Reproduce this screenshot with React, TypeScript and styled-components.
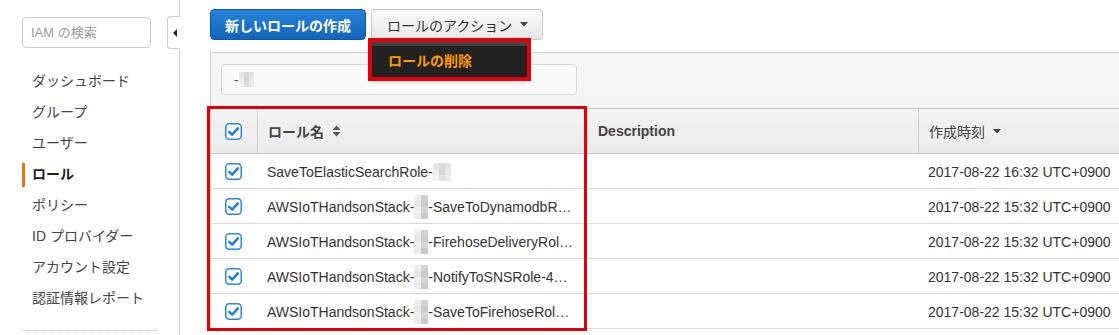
import React from "react";
import styled, { createGlobalStyle } from "styled-components";

const GlobalStyle = createGlobalStyle`
  html, body { margin: 0; padding: 0; background: #fff; }
  body {
    font-family: "Liberation Sans", "Noto Sans CJK JP", sans-serif;
    font-size: 14px;
    color: #333;
    overflow: hidden;
  }
  * { box-sizing: border-box; }
`;

const Page = styled.div`
  display: flex;
  width: 1119px;
  height: 335px;
  overflow: hidden;
`;

const Sidebar = styled.aside`
  position: relative;
  flex: 0 0 180px;
  border-right: 1px solid #ccc;
  padding: 17px 0 0 22px;
`;

const SideSearch = styled.div`
  width: 129px;
  height: 31px;
  border: 1px solid #ccc;
  border-radius: 4px;
  padding-left: 8px;
  font-size: 13px;
  line-height: 29px;
  color: #9a9a9a;
`;

const CollapseTab = styled.div`
  position: absolute;
  right: -1px;
  top: 16px;
  width: 13px;
  height: 33px;
  background: #fff;
  border: 1px solid #ccc;
  border-right: none;
  border-radius: 4px 0 0 4px;
  display: flex;
  align-items: center;
  justify-content: center;
  &::after {
    content: "";
    width: 0;
    height: 0;
    border-top: 4px solid transparent;
    border-bottom: 4px solid transparent;
    border-right: 4px solid #222;
    margin-left: 2px;
  }
`;

const NavList = styled.ul`
  list-style: none;
  margin: 18px 0 0;
  padding: 0;
`;

const NavItem = styled.li<{ $active?: boolean }>`
  position: relative;
  height: 31px;
  line-height: 31px;
  padding-left: 10px;
  font-size: 14px;
  color: ${(p) => (p.$active ? "#222" : "#444")};
  font-weight: ${(p) => (p.$active ? "bold" : "normal")};
  &::before {
    content: "";
    display: ${(p) => (p.$active ? "block" : "none")};
    position: absolute;
    left: 0;
    top: 4px;
    width: 3px;
    height: 24px;
    background: #ec7211;
  }
`;

const SideDivider = styled.div`
  width: 135px;
  margin-top: 16px;
  border-top: 1px dotted #bbb;
`;

const Main = styled.main`
  flex: 1;
  padding: 9px 0 0 30px;
  min-width: 0;
`;

const Toolbar = styled.div`
  display: flex;
  gap: 5px;
  height: 31px;
`;

const PrimaryButton = styled.button`
  height: 31px;
  padding: 0 14px;
  border: 1px solid #0f58a8;
  border-radius: 4px;
  background: linear-gradient(#2783d9, #1464bb);
  color: #fff;
  font-family: inherit;
  font-size: 14px;
  font-weight: bold;
  cursor: pointer;
`;

const ActionWrap = styled.div`
  position: relative;
`;

const ActionButton = styled.button`
  height: 31px;
  width: 172px;
  padding: 0 0 0 15px;
  display: flex;
  align-items: center;
  gap: 8px;
  border: 1px solid #c6c6c6;
  border-radius: 4px;
  background: linear-gradient(#fbfbfb, #e6e6e6);
  color: #333;
  font-family: inherit;
  font-size: 14px;
  cursor: pointer;
`;

const Dropdown = styled.div`
  position: absolute;
  top: 33px;
  left: 1px;
  width: 155px;
  height: 35px;
  background: #222;
  border-top: 4px solid #444;
  outline: 4px solid #e2000c;
  box-shadow: 0 3px 6px rgba(0, 0, 0, 0.35);
  padding-left: 16px;
  line-height: 31px;
  color: #ff9900;
  font-size: 14px;
  font-weight: bold;
  z-index: 5;
`;

const Panel = styled.section`
  margin-top: 12px;
  border-top: 1px solid #ccc;
  border-left: 1px solid #ccc;
  background: linear-gradient(#f6f6f6, #eeeeee);
`;

const FilterBar = styled.div`
  padding: 11px 10px 13px;
`;

const FilterInput = styled.div`
  width: 356px;
  height: 31px;
  border: 1px solid #d6d6d6;
  border-radius: 4px;
  background: #fafafa;
  padding-left: 12px;
  display: flex;
  align-items: center;
  color: #555;
  font-size: 14px;
`;

const TableArea = styled.div`
  position: relative;
  background: #fff;
`;

const Highlight = styled.div`
  position: absolute;
  left: -4px;
  top: -2px;
  width: 380px;
  height: 225px;
  border: 3px solid #e2000c;
  pointer-events: none;
  z-index: 3;
`;

const Row = styled.div<{ $head?: boolean }>`
  display: grid;
  grid-template-columns: 46px 330px 331px 1fr;
  height: ${(p) => (p.$head ? "46px" : "35px")};
  border-top: ${(p) => (p.$head ? "1px solid #c4c4c4" : "none")};
  border-bottom: 1px solid ${(p) => (p.$head ? "#c8c8c8" : "#dadada")};
  background: ${(p) => (p.$head ? "linear-gradient(#f3f3f3, #ebebeb)" : "#fff")};
`;

const CheckCell = styled.div`
  display: flex;
  align-items: center;
  padding-left: 14px;
`;

const HeadCell = styled.div<{ $bold?: boolean }>`
  display: flex;
  align-items: center;
  gap: 8px;
  border-left: 1px solid #cfcfcf;
  padding-left: 10px;
  font-weight: ${(p) => (p.$bold ? "bold" : "normal")};
  color: #444;
  white-space: nowrap;
`;

const Cell = styled.div`
  display: flex;
  align-items: center;
  padding-left: 10px;
  padding-top: 1px;
  white-space: nowrap;
  overflow: hidden;
  color: #333;
`;

const MosaicGrid = styled.span<{ $cols: number; $w: number; $h: number }>`
  display: inline-grid;
  grid-template-columns: repeat(${(p) => p.$cols}, ${(p) => p.$w}px);
  grid-auto-rows: ${(p) => p.$h}px;
  vertical-align: middle;
`;

const MosaicCell = styled.span<{ $c: string }>`
  background: ${(p) => p.$c};
`;

const Mosaic = ({ cols, w, h, colors }: { cols: number; w: number; h: number; colors: string[] }) => (
  <MosaicGrid $cols={cols} $w={w} $h={h}>
    {colors.map((c, i) => (
      <MosaicCell key={i} $c={c} />
    ))}
  </MosaicGrid>
);

const Check = () => (
  <svg width="17" height="17" viewBox="0 0 17 17">
    <rect x="0.75" y="0.75" width="15.5" height="15.5" rx="3.5" fill="#fff" stroke="#2c88e3" strokeWidth="1.5" />
    <path d="M4.3 8.8 L7.2 11.6 L12.8 5.4" fill="none" stroke="#1f7fe0" strokeWidth="2.5" strokeLinecap="round" strokeLinejoin="round" />
  </svg>
);

const SortIcon = () => (
  <svg width="9" height="12" viewBox="0 0 9 12">
    <path d="M4.5 0.5 L8.5 5 L0.5 5 Z" fill="#555" />
    <path d="M0.5 7 L8.5 7 L4.5 11.5 Z" fill="#555" />
  </svg>
);

const Caret = () => (
  <svg width="8" height="5" viewBox="0 0 8 5">
    <path d="M0 0 L8 0 L4 4.5 Z" fill="#444" />
  </svg>
);

const navItems = [
  "ダッシュボード",
  "グループ",
  "ユーザー",
  "ロール",
  "ポリシー",
  "ID プロバイダー",
  "アカウント設定",
  "認証情報レポート",
];

const smallMosaic = ["#e6e6e6", "#d9d9d9", "#e3e3e3", "#efefef", "#d4d4d4", "#e9e9e9", "#f3f3f3", "#e1e1e1", "#ececec"];
const stackMosaic = ["#eeeeee", "#d2d2d2", "#e8e8e8", "#cdcdcd", "#f0f0f0", "#d7d7d7", "#ebebeb", "#cacaca"];

type RoleRow = { prefix: string; mosaic: "small" | "stack"; suffix: string; date: string };

const rows: RoleRow[] = [
  { prefix: "SaveToElasticSearchRole-", mosaic: "small", suffix: "", date: "2017-08-22 16:32 UTC+0900" },
  { prefix: "AWSIoTHandsonStack-", mosaic: "stack", suffix: "-SaveToDynamodbR…", date: "2017-08-22 15:32 UTC+0900" },
  { prefix: "AWSIoTHandsonStack-", mosaic: "stack", suffix: "-FirehoseDeliveryRol…", date: "2017-08-22 15:32 UTC+0900" },
  { prefix: "AWSIoTHandsonStack-", mosaic: "stack", suffix: "-NotifyToSNSRole-4…", date: "2017-08-22 15:32 UTC+0900" },
  { prefix: "AWSIoTHandsonStack-", mosaic: "stack", suffix: "-SaveToFirehoseRol…", date: "2017-08-22 15:32 UTC+0900" },
];

export default function App() {
  return (
    <>
      <GlobalStyle />
      <Page>
        <Sidebar>
          <SideSearch>IAM の検索</SideSearch>
          <CollapseTab />
          <NavList>
            {navItems.map((n) => (
              <NavItem key={n} $active={n === "ロール"}>
                {n}
              </NavItem>
            ))}
          </NavList>
          <SideDivider />
        </Sidebar>
        <Main>
          <Toolbar>
            <PrimaryButton>新しいロールの作成</PrimaryButton>
            <ActionWrap>
              <ActionButton>
                ロールのアクション
                <Caret />
              </ActionButton>
              <Dropdown>ロールの削除</Dropdown>
            </ActionWrap>
          </Toolbar>
          <Panel>
            <FilterBar>
              <FilterInput>
                -
                <Mosaic cols={3} w={5} h={5} colors={smallMosaic} />
              </FilterInput>
            </FilterBar>
            <TableArea>
              <Highlight />
              <Row $head>
                <CheckCell>
                  <Check />
                </CheckCell>
                <HeadCell $bold>
                  ロール名
                  <SortIcon />
                </HeadCell>
                <HeadCell $bold>Description</HeadCell>
                <HeadCell>
                  作成時刻
                  <Caret />
                </HeadCell>
              </Row>
              {rows.map((r, i) => (
                <Row key={i}>
                  <CheckCell>
                    <Check />
                  </CheckCell>
                  <Cell>
                    {r.prefix}
                    {r.mosaic === "small" ? (
                      <Mosaic cols={3} w={6} h={6} colors={smallMosaic} />
                    ) : (
                      <Mosaic cols={2} w={7} h={6} colors={stackMosaic} />
                    )}
                    {r.suffix}
                  </Cell>
                  <Cell />
                  <Cell>{r.date}</Cell>
                </Row>
              ))}
            </TableArea>
          </Panel>
        </Main>
      </Page>
    </>
  );
}
